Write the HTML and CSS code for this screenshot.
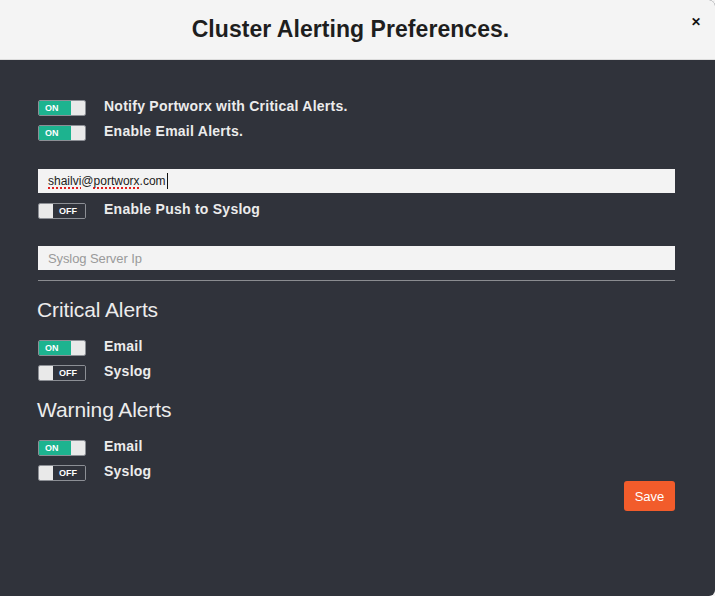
FILE: index.html
```html
<!DOCTYPE html>
<html>
<head>
<meta charset="utf-8">
<link rel="stylesheet" href="styles.css">
</head>
<body>
<div class="modal">
  <div class="header">
    <h1 class="title">Cluster Alerting Preferences.</h1>
    <span class="close">&#x2715;</span>
  </div>
  <div class="content">
    <div class="group">
      <div class="row">
        <span class="toggle on"><span class="state">ON</span><span class="knob"></span></span>
        <span class="label">Notify Portworx with Critical Alerts.</span>
      </div>
      <div class="row">
        <span class="toggle on"><span class="state">ON</span><span class="knob"></span></span>
        <span class="label">Enable Email Alerts.</span>
      </div>
    </div>
    <div class="field email"><span class="spell">shailvi</span>@<span class="spell">portworx</span>.com<span class="caret"></span></div>
    <div class="row">
      <span class="toggle off"><span class="knob"></span><span class="state">OFF</span></span>
      <span class="label">Enable Push to Syslog</span>
    </div>
    <div class="field syslog"><span class="placeholder">Syslog Server Ip</span></div>
    <hr class="divider">
    <h2 class="section-title">Critical Alerts</h2>
    <div class="group">
      <div class="row">
        <span class="toggle on"><span class="state">ON</span><span class="knob"></span></span>
        <span class="label">Email</span>
      </div>
      <div class="row">
        <span class="toggle off"><span class="knob"></span><span class="state">OFF</span></span>
        <span class="label">Syslog</span>
      </div>
    </div>
    <h2 class="section-title">Warning Alerts</h2>
    <div class="group">
      <div class="row">
        <span class="toggle on"><span class="state">ON</span><span class="knob"></span></span>
        <span class="label">Email</span>
      </div>
      <div class="row">
        <span class="toggle off"><span class="knob"></span><span class="state">OFF</span></span>
        <span class="label">Syslog</span>
      </div>
    </div>
    <div class="actions">
      <button class="save">Save</button>
    </div>
  </div>
</div>
</body>
</html>
```
FILE: styles.css
```css
html, body {
  margin: 0;
  padding: 0;
  background: #f4f4f4;
}
body {
  font-family: "Liberation Sans", Arial, sans-serif;
}
.modal {
  width: 715px;
  height: 596px;
  background: #30333b;
  border-radius: 0 6px 6px 0;
  overflow: hidden;
  display: flex;
  flex-direction: column;
}
.header {
  height: 59px;
  flex: none;
  background: #f4f4f4;
  border-bottom: 1px solid #dcdcdc;
  display: flex;
  align-items: center;
  padding: 0 15px;
}
.title {
  flex: 1;
  margin: 0;
  text-align: center;
  font-size: 23px;
  font-weight: bold;
  color: #1e1e1e;
  letter-spacing: 0.05px;
}
.close {
  width: 14px;
  font-size: 12px;
  font-weight: bold;
  color: #111;
  text-align: center;
  margin-top: -16px;
  margin-right: -3px;
  margin-left: 3px;
}
.content {
  padding: 40px 40px 0 38px;
  display: flex;
  flex-direction: column;
}
.group {
  display: flex;
  flex-direction: column;
  gap: 9px;
}
.row {
  display: flex;
  align-items: flex-start;
  gap: 18px;
  height: 16px;
}
.label {
  color: #ececec;
  font-size: 14px;
  font-weight: bold;
  line-height: 14px;
  letter-spacing: 0.25px;
  margin-top: -1px;
}
.toggle {
  width: 48px;
  height: 16px;
  box-sizing: border-box;
  border: 1px solid #8c8f95;
  border-radius: 2px;
  display: flex;
  overflow: hidden;
  flex: none;
}
.toggle .knob {
  width: 14px;
  background: #e9e9e9;
  flex: none;
}
.toggle .state {
  flex: 1;
  font-size: 9px;
  font-weight: bold;
  color: #fff;
  line-height: 14px;
}
.toggle.on .state {
  background: #1db38f;
  padding-left: 6px;
}
.toggle.off .state {
  background: #30333b;
  text-align: center;
  padding-right: 2px;
}
.field {
  height: 24px;
  box-sizing: border-box;
  background: #f3f3f3;
  padding-left: 10px;
  display: flex;
  align-items: center;
}
.email {
  margin-top: 28px;
  margin-bottom: 10px;
  font-size: 12px;
  color: #222;
}
.spell {
  text-decoration: underline dotted #e02020;
  text-decoration-thickness: 2px;
  text-underline-offset: 2px;
}
.caret {
  display: inline-block;
  width: 1px;
  height: 16px;
  background: #111;
  margin-left: 1px;
}
.syslog {
  margin-top: 27px;
}
.placeholder {
  font-size: 13px;
  color: #9a9a9a;
  letter-spacing: -0.1px;
}
.divider {
  border: none;
  border-top: 1px solid #8a8c90;
  margin: 10px 0 0 0;
  height: 0;
}
.section-title {
  margin: 17px 0 18px -1px;
  font-size: 21px;
  line-height: 24px;
  font-weight: normal;
  color: #ececec;
  letter-spacing: -0.1px;
}
.actions {
  display: flex;
  justify-content: flex-end;
}
.save {
  width: 51px;
  height: 30px;
  background: #f25c2b;
  color: #fff;
  border: none;
  border-radius: 3px;
  font-family: "Liberation Sans", Arial, sans-serif;
  font-size: 13px;
  padding: 0;
}
```
